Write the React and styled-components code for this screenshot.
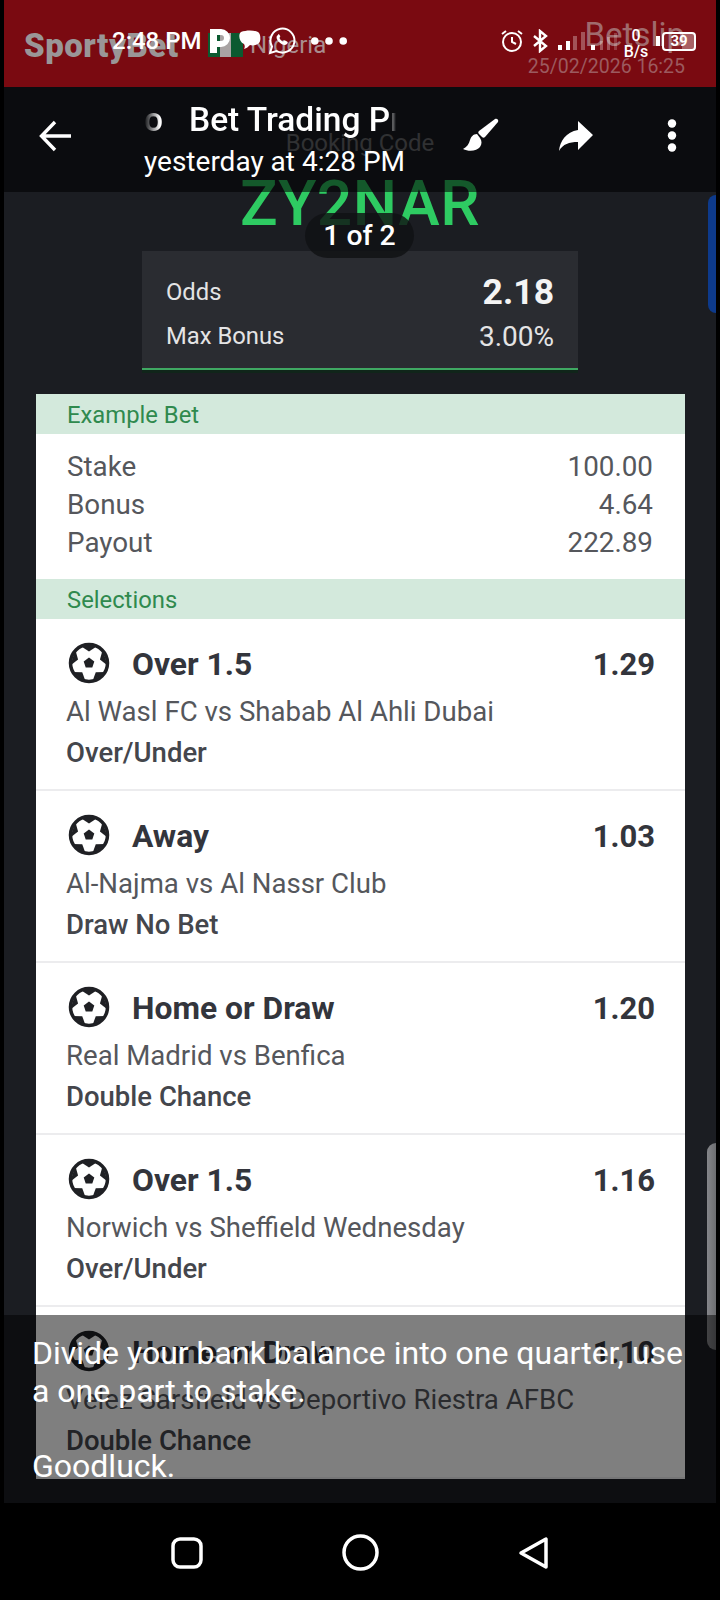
import React from 'react';
import styled, { createGlobalStyle } from 'styled-components';

const Global = createGlobalStyle`
  html, body { margin: 0; padding: 0; background: #000; }
  * { box-sizing: border-box; }
  body { font-family: Roboto, "Liberation Sans", sans-serif; }
`;

const Screen = styled.div`
  position: relative;
  width: 720px;
  height: 1600px;
  background: #000;
  overflow: hidden;
  display: flex;
  flex-direction: column;
`;

/* the photo underneath */
const Photo = styled.div`
  width: 712px;
  height: 1503px;
  margin-left: 4px;
  background: #1b1d22;
  display: flex;
  flex-direction: column;
  overflow: hidden;
`;

const RedBand = styled.div`
  height: 87px;
  flex: none;
  background: #7a0a11;
  display: flex;
  justify-content: space-between;
  padding: 0 31px 0 20px;
`;

const Logo = styled.div`
  display: flex;
  align-items: center;
  height: 46px;
  margin-top: 22px;
`;

const LogoName = styled.span`
  width: 184px;
  font-size: 33px;
  font-weight: 900;
  letter-spacing: 0.5px;
  color: #9a9697;
`;

const Flag = styled.div`
  width: 35px;
  height: 24px;
  display: flex;
  margin-right: 7px;
`;

const FlagPart = styled.div`
  flex: 1;
  background: ${p => p.$c};
`;

const Country = styled.span`
  font-size: 24px;
  color: #a98c8e;
`;

const Betslip = styled.div`
  display: flex;
  flex-direction: column;
  align-items: flex-end;
  margin-top: 16px;
`;

const BetslipTitle = styled.div`
  font-size: 33px;
  line-height: 38px;
  color: #a06a6d;
`;

const BetslipDate = styled.div`
  font-size: 19.5px;
  line-height: 20px;
  margin-top: 3px;
  color: #9c5a5f;
`;

const Booking = styled.div`
  height: 164px;
  display: flex;
  flex-direction: column;
  align-items: center;
  flex: none;
`;

const BookingLabel = styled.div`
  margin-top: 42px;
  font-size: 24px;
  line-height: 28px;
  color: #6f7074;
`;

const BookingCode = styled.div`
  font-size: 62.5px;
  line-height: 62px;
  margin-top: 16px;
  font-weight: 500;
  color: #2ecb62;
  letter-spacing: 0.5px;
`;

const Summary = styled.div`
  align-self: center;
  width: 436px;
  height: 119px;
  flex: none;
  background: #2a2c31;
  border-bottom: 2px solid #3fa862;
  box-shadow: 0 3px 0 #10251a;
  padding: 19px 24px 0;
  color: #e4e4e5;
`;

const SummaryRow = styled.div`
  display: flex;
  justify-content: space-between;
  align-items: center;
  height: ${p => p.$h}px;
  font-size: 23.8px;
`;

const SummaryOdds = styled.span`
  font-size: 35.5px;
  font-weight: 700;
  color: #f4f4f4;
`;

const SummaryBonus = styled.span`
  font-size: 28px;
`;

const Card = styled.div`
  width: 649px;
  margin: 24px 0 0 32px;
  flex: none;
  background: #fff;
`;

const CardHead = styled.div`
  height: 40px;
  padding-left: 31px;
  background: #d3e9dc;
  color: #2f8a4e;
  font-size: 23.8px;
  line-height: 43px;
`;

const Totals = styled.div`
  height: 145px;
  padding: 14px 32px 0 31px;
  color: #55575c;
`;

const TotalRow = styled.div`
  display: flex;
  justify-content: space-between;
  height: 38px;
  font-size: 27.8px;
  line-height: 38px;
`;

const Selection = styled.div`
  height: 172px;
  padding: 22px 30px 0 30px;
  border-bottom: 2px solid #ececee;
`;

const SelectionTop = styled.div`
  display: flex;
  align-items: center;
  height: 46px;
`;

const Ball = styled.svg`
  width: 42px;
  height: 42px;
  margin: -2px 0 0 2px;
  flex: none;
`;

const Pick = styled.div`
  margin-left: 22px;
  flex: 1;
  font-size: 31.8px;
  font-weight: 700;
  color: #33353c;
`;

const Price = styled.div`
  font-size: 31px;
  font-weight: 700;
  color: #33353c;
`;

const Match = styled.div`
  margin-top: 5px;
  font-size: 27.6px;
  line-height: 40px;
  color: #55575c;
`;

const Market = styled.div`
  font-size: 27.5px;
  font-weight: 500;
  line-height: 42px;
  color: #44464c;
`;

/* things that sit on top of the photo */
const StatusBar = styled.div`
  position: absolute;
  top: 19px;
  left: 112px;
  right: 24px;
  height: 44px;
  display: flex;
  align-items: center;
  color: #fff;
`;

const Clock = styled.span`
  font-size: 24px;
  font-weight: 500;
  margin-right: 6px;
`;

const StatusGap = styled.div`
  flex: 1;
`;

const StatusIcon = styled.svg`
  flex: none;
  margin-left: ${p => p.$gap || 0}px;
`;

const NetSpeed = styled.div`
  display: flex;
  flex-direction: column;
  align-items: center;
  width: 24px;
  margin: 6px 0 0 4px;
  font-size: 16px;
  line-height: 16px;
  font-weight: 500;
`;

const Battery = styled.div`
  width: 34px;
  height: 19px;
  margin-left: 2px;
  border: 2px solid #fff;
  border-radius: 4px;
  font-size: 15px;
  line-height: 15px;
  font-weight: 700;
  text-align: center;
  background: linear-gradient(90deg, rgba(255,255,255,.08) 60%, rgba(255,255,255,.35) 60%);
`;

const Toolbar = styled.div`
  position: absolute;
  top: 87px;
  left: 4px;
  width: 712px;
  height: 105px;
  background: rgba(0, 0, 0, 0.56);
  color: #fff;
`;

const ToolIcon = styled.svg`
  position: absolute;
  left: ${p => p.$x}px;
  top: ${p => p.$y}px;
`;

const TitleBlock = styled.div`
  position: absolute;
  left: 140px;
  top: 13px;
  white-space: nowrap;
`;

const TitleClip = styled.div`
  width: 252px;
  overflow: hidden;
  display: flex;
  gap: 26px;
  font-size: 33.5px;
  line-height: 40px;
  font-weight: 500;
  -webkit-mask-image: linear-gradient(90deg, transparent 0, #000 16px, #000 244px, transparent 252px);
  mask-image: linear-gradient(90deg, transparent 0, #000 16px, #000 244px, transparent 252px);
`;

const TitleTail = styled.span`
  flex: none;
`;

const Subtitle = styled.div`
  font-size: 28px;
  line-height: 34px;
  margin-top: 5px;
`;

const Counter = styled.div`
  position: absolute;
  left: 305px;
  top: 213px;
  width: 109px;
  height: 45px;
  border-radius: 24px;
  background: rgba(16, 17, 20, 0.82);
  color: #fff;
  font-size: 28.4px;
  line-height: 45px;
  font-weight: 500;
  text-align: center;
`;

const EdgeTab = styled.div`
  position: absolute;
  top: ${p => p.$top}px;
  left: ${p => p.$left}px;
  width: ${p => 716 - p.$left}px;
  height: ${p => p.$h}px;
  background: ${p => p.$c};
  border-radius: 16px 0 0 16px;
`;

const Caption = styled.div`
  position: absolute;
  left: 4px;
  top: 1315px;
  width: 712px;
  height: 188px;
  background: rgba(0, 0, 0, 0.5);
`;

const CaptionText = styled.div`
  position: absolute;
  left: 32px;
  top: 1335px;
  width: 670px;
  height: 145px;
  overflow: hidden;
  color: #fff;
  font-size: 32px;
  line-height: 37.5px;
  white-space: pre;
`;

const NavBar = styled.div`
  position: absolute;
  left: 0;
  right: 0;
  top: 1503px;
  height: 97px;
  background: #000;
  display: flex;
  align-items: center;
  justify-content: center;
  gap: 139px;
  padding-top: 2px;
`;

const SELECTIONS = [
  { pick: 'Over 1.5', price: '1.29', match: 'Al Wasl FC vs Shabab Al Ahli Dubai', market: 'Over/Under' },
  { pick: 'Away', price: '1.03', match: 'Al-Najma vs Al Nassr Club', market: 'Draw No Bet' },
  { pick: 'Home or Draw', price: '1.20', match: 'Real Madrid vs Benfica', market: 'Double Chance' },
  { pick: 'Over 1.5', price: '1.16', match: 'Norwich vs Sheffield Wednesday', market: 'Over/Under' },
  { pick: 'Home or Draw', price: '1.10', match: 'Velez Sarsfield vs Deportivo Riestra AFBC', market: 'Double Chance' },
];

// dark wedges around the rim of the ball
const wedge = deg => {
  const pt = (r, d) => {
    const a = (d * Math.PI) / 180;
    return `${(21 + r * Math.cos(a)).toFixed(2)},${(21 + r * Math.sin(a)).toFixed(2)}`;
  };
  return [pt(11.5, deg), pt(19, deg - 26), pt(19, deg + 26)].join(' ');
};

const SoccerBall = () => (
  <Ball viewBox="0 0 42 42">
    <circle cx="21" cy="21" r="18.500" fill="#fff" stroke="#1f2024" strokeWidth="3.500" />
    {[-90, -18, 54, 126, 198].map(d => (
      <polygon key={d} points={wedge(d)} fill="#1f2024" />
    ))}
    <path d="M21 15.500l5.300 3.900-2 6.200h-6.600l-2-6.200z" fill="#1f2024" />
  </Ball>
);

export default function App() {
  return (
    <Screen>
      <Global />
      <Photo>
        <RedBand>
          <Logo>
            <LogoName>SportyBet</LogoName>
            <Flag>
              <FlagPart $c="#0b5a30" />
              <FlagPart $c="#a9a3a3" />
              <FlagPart $c="#0b5a30" />
            </Flag>
            <Country>Nigeria</Country>
          </Logo>
          <Betslip>
            <BetslipTitle>Betslip</BetslipTitle>
            <BetslipDate>25/02/2026 16:25</BetslipDate>
          </Betslip>
        </RedBand>
        <Booking>
          <BookingLabel>Booking Code</BookingLabel>
          <BookingCode>ZY2NAR</BookingCode>
        </Booking>
        <Summary>
          <SummaryRow $h={44}>
            <span>Odds</span>
            <SummaryOdds>2.18</SummaryOdds>
          </SummaryRow>
          <SummaryRow $h={44}>
            <span>Max Bonus</span>
            <SummaryBonus>3.00%</SummaryBonus>
          </SummaryRow>
        </Summary>
        <Card>
          <CardHead>Example Bet</CardHead>
          <Totals>
            <TotalRow><span>Stake</span><span>100.00</span></TotalRow>
            <TotalRow><span>Bonus</span><span>4.64</span></TotalRow>
            <TotalRow><span>Payout</span><span>222.89</span></TotalRow>
          </Totals>
          <CardHead>Selections</CardHead>
          {SELECTIONS.map((s, i) => (
            <Selection key={i}>
              <SelectionTop>
                <SoccerBall />
                <Pick>{s.pick}</Pick>
                <Price>{s.price}</Price>
              </SelectionTop>
              <Match>{s.match}</Match>
              <Market>{s.market}</Market>
            </Selection>
          ))}
        </Card>
      </Photo>

      <StatusBar>
        <Clock>2:48 PM</Clock>
        <StatusIcon width="24" height="26" viewBox="0 0 24 26">
          <path fill="#fff" fillRule="evenodd" d="M2 1h11a9 9 0 0 1 0 18H9v6H2zM9 7v6h4a3 3 0 0 0 0-6z" />
        </StatusIcon>
        <StatusIcon $gap={3} width="28" height="24" viewBox="0 0 28 24">
          <path fill="#fff" d="M6 3c5-2 13-2 17 0 3 2 3 9 1 11-2 2-6 3-9 2-2 2-3 3-6 4 1-2 1-3 0-5C4 13 3 5 6 3z" />
        </StatusIcon>
        <StatusIcon $gap={5} width="28" height="28" viewBox="0 0 28 28">
          <path fill="none" stroke="#fff" strokeWidth="2" d="M2 26l2-6.500A12 12 0 1 1 8.500 24z" />
          <path fill="#fff" d="M10 8c-2 1-2 4 1 7s6 4 8 2c1-1 1-2 0-2.500l-2-1c-1-.5-1.500 1-2 1-1 0-3-2-3.500-3.500 0-.5 1-1 .7-2l-1-1.500c-.4-.3-.8-.3-1.200 0z" />
        </StatusIcon>
        <StatusIcon $gap={15} width="36" height="10" viewBox="0 0 38 10">
          <circle cx="4" cy="5" r="4" fill="#fff" />
          <circle cx="19" cy="5" r="4" fill="#fff" />
          <circle cx="34" cy="5" r="4" fill="#fff" />
        </StatusIcon>
        <StatusGap />
        <StatusIcon width="24" height="24" viewBox="0 0 24 24" fill="none" stroke="#fff" strokeWidth="2">
          <circle cx="12" cy="13" r="9" />
          <path d="M12 8v5l4 2M2 5l4-3M22 5l-4-3" />
        </StatusIcon>
        <StatusIcon $gap={8} width="16" height="24" viewBox="0 0 16 24" fill="none" stroke="#fff" strokeWidth="2.400">
          <path d="M2 7l12 10-6 5V2l6 5L2 17" />
        </StatusIcon>
        <StatusIcon $gap={10} width="62" height="20" viewBox="0 0 62 20" fill="#fff">
          <rect x="0" y="14" width="4" height="5" />
          <rect x="8" y="10" width="4" height="9" />
          <rect x="15" y="5" width="4" height="14" opacity=".3" />
          <rect x="23" y="1" width="4" height="18" opacity=".3" />
          <rect x="33" y="14" width="4" height="5" />
          <rect x="42" y="10" width="3" height="9" opacity=".3" />
          <rect x="49" y="6" width="3" height="13" opacity=".3" />
          <rect x="56" y="2" width="3" height="17" opacity=".2" />
        </StatusIcon>
        <NetSpeed><span>0</span><span>B/s</span></NetSpeed>
        <StatusIcon $gap={8} width="4" height="10" viewBox="0 0 4 10">
          <rect width="4" height="10" fill="#fff" />
        </StatusIcon>
        <Battery>39</Battery>
      </StatusBar>

      <Toolbar>
        <ToolIcon $x={34} $y={33} width="34" height="32" viewBox="0 0 34 32" fill="none" stroke="#fff" strokeWidth="3.400">
          <path d="M33 16H4M17 2L3.500 16 17 30" />
        </ToolIcon>
        <TitleBlock>
          <TitleClip>
            <TitleTail>o</TitleTail>
            <TitleTail>Bet Trading Pro</TitleTail>
          </TitleClip>
          <Subtitle>yesterday at 4:28 PM</Subtitle>
        </TitleBlock>
        <ToolIcon $x={458} $y={30} width="38" height="36" viewBox="0 0 38 36" fill="#fff">
          <path d="M33 2c2-1 4 1 3 3L23 20c-1 1-2 1-3 0l-3-3c-1-1-1-2 0-3z" />
          <path d="M15 17c-4 0-6 3-7 6-1 4-3 7-7 9 6 3 14 2 17-2 2-3 2-6 0-9z" />
        </ToolIcon>
        <ToolIcon $x={554} $y={33} width="36" height="32" viewBox="0 0 36 32" fill="#fff">
          <path d="M20 1l15 14-15 15v-8C11 22 5 24 1 31c1-10 7-19 19-21z" />
        </ToolIcon>
        <ToolIcon $x={660} $y={32} width="16" height="34" viewBox="0 0 16 34" fill="#fff">
          <circle cx="8" cy="4.500" r="4.200" />
          <circle cx="8" cy="16.500" r="4.200" />
          <circle cx="8" cy="28.500" r="4.200" />
        </ToolIcon>
      </Toolbar>

      <Counter>1 of 2</Counter>
      <EdgeTab $top={195} $left={708} $h={118} $c="#0d3a8c" />
      <EdgeTab $top={1143} $left={707} $h={207} $c="linear-gradient(90deg, #85868a, #6c6d70)" />

      <Caption />
      <CaptionText>{'Divide your bank balance into one quarter, use\na one part to stake.\n\nGoodluck.'}</CaptionText>

      <NavBar>
        <svg width="32" height="32" viewBox="0 0 32 32" fill="none" stroke="#fff" strokeWidth="3.500">
          <rect x="2" y="2" width="28" height="28" rx="7" />
        </svg>
        <svg width="37" height="37" viewBox="0 0 37 37" fill="none" stroke="#fff" strokeWidth="3.500">
          <circle cx="18.500" cy="18.500" r="16.500" />
        </svg>
        <svg width="31" height="34" viewBox="0 0 31 34" fill="none" stroke="#fff" strokeWidth="3.500" strokeLinejoin="round">
          <path d="M28 3v28L3 17z" />
        </svg>
      </NavBar>
    </Screen>
  );
}
